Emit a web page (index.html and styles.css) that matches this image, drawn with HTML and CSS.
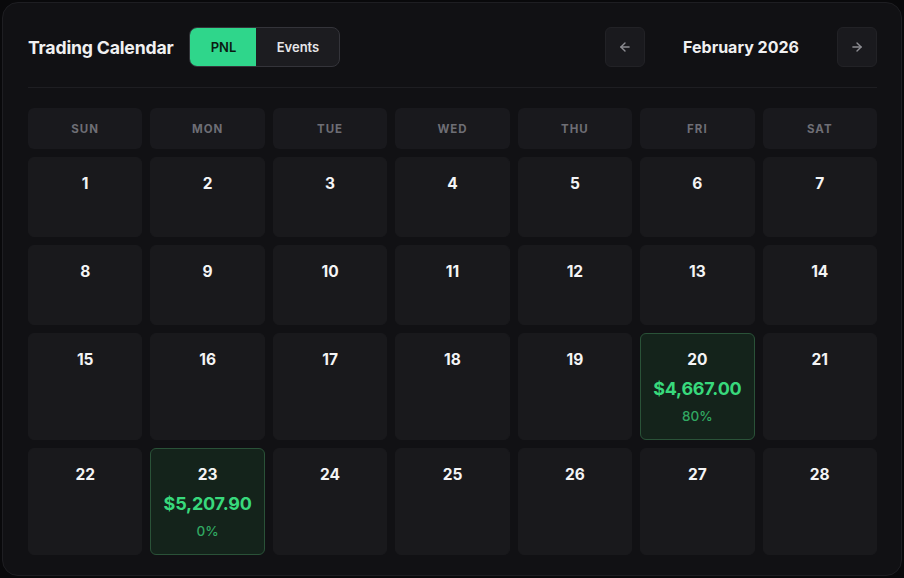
FILE: index.html
```html
<!DOCTYPE html>
<html lang="en">
<head>
  <meta charset="UTF-8" />
  <title>Trading Calendar</title>
  <link rel="stylesheet" href="styles.css">
</head>
<body>
  <div class="calendar">
    <div class="cal-header">
      <div class="cal-left">
        <h1>Trading Calendar</h1>
        <div class="toggle">
          <button class="toggle-btn active">PNL</button>
          <button class="toggle-btn">Events</button>
        </div>
      </div>
      <div class="cal-nav">
        <button class="nav-btn" aria-label="Previous month">
          <svg width="14" height="14" viewBox="0 0 24 24" fill="none" stroke="currentColor" stroke-width="2.4" stroke-linecap="round" stroke-linejoin="round"><path d="M19 12H5"/><path d="M12 19l-7-7 7-7"/></svg>
        </button>
        <div class="month">February 2026</div>
        <button class="nav-btn" aria-label="Next month">
          <svg width="14" height="14" viewBox="0 0 24 24" fill="none" stroke="currentColor" stroke-width="2.4" stroke-linecap="round" stroke-linejoin="round"><path d="M5 12h14"/><path d="M12 5l7 7-7 7"/></svg>
        </button>
      </div>
    </div>

    <div class="grid" id="grid">
      <div class="dow">SUN</div>
      <div class="dow">MON</div>
      <div class="dow">TUE</div>
      <div class="dow">WED</div>
      <div class="dow">THU</div>
      <div class="dow">FRI</div>
      <div class="dow">SAT</div>
    </div>
  </div>

  <script>
    // pnl entries keyed by day of month
    const pnl = {
      20: { amount: '$4,667.00', pct: '80%' },
      23: { amount: '$5,207.90', pct: '0%' }
    };

    const grid = document.getElementById('grid');
    for (let d = 1; d <= 28; d++) {
      const cell = document.createElement('div');
      cell.className = 'day';
      let html = '<div class="date">' + d + '</div>';
      if (pnl[d]) {
        cell.classList.add('profit');
        html += '<div class="amount">' + pnl[d].amount + '</div>';
        html += '<div class="pct">' + pnl[d].pct + '</div>';
      }
      cell.innerHTML = html;
      grid.appendChild(cell);
    }
  </script>
</body>
</html>
```

FILE: styles.css
```css
* { box-sizing: border-box; }
body { margin: 0; background: #09090b; font-family: Inter, "Liberation Sans", sans-serif; color: #f2f2f3; }

.calendar { margin: 2px; height: 574px; background: #111114; border: 1px solid #1e1e22; border-radius: 16px; padding: 24px 24px 0 25px; }

.cal-header { display: flex; justify-content: space-between; align-items: center; height: 40px; margin-bottom: 20px; }
.cal-left { display: flex; align-items: center; gap: 16px; }
h1 { margin: 0; font-size: 17.7px; font-weight: 700; letter-spacing: -0.2px; color: #f0f0f1; }

.toggle { display: flex; height: 40px; border: 1px solid #34343a; border-radius: 8px; background: #1c1c20; overflow: hidden; }
.toggle-btn { border: 0; background: transparent; font-family: inherit; font-size: 13px; font-weight: 600; color: #e6e6e8; width: 83px; padding: 0; cursor: pointer; }
.toggle-btn.active { background: #2fd68b; color: #0b1a12; width: 66px; }

.cal-nav { display: flex; align-items: center; }
.nav-btn { width: 40px; height: 40px; border: 1px solid #222226; background: #1a1a1e; border-radius: 6px; color: #8d8d93; display: flex; align-items: center; justify-content: center; padding: 0; }
.month { width: 192px; text-align: center; font-size: 16px; font-weight: 700; color: #f0f0f1; }

.grid { border-top: 1px solid #1e1e22; padding-top: 20px; display: grid; grid-template-columns: repeat(7, 1fr); grid-auto-rows: minmax(80px, auto); grid-template-rows: 41px; gap: 8px; }

.dow { background: #19191d; border-radius: 6px; display: flex; align-items: center; justify-content: center; font-size: 11.5px; font-weight: 700; letter-spacing: 1px; color: #6e6e75; }

.day { background: #19191c; border: 1px solid #19191c; border-radius: 6px; padding: 16px 6px 14px; text-align: center; }
.date { font-size: 15.5px; font-weight: 700; line-height: 20px; color: #f4f4f5; }
.amount { margin-top: 8px; font-size: 18px; line-height: 22px; font-weight: 700; color: #38d97c; letter-spacing: -0.2px; }
.pct { margin-top: 7px; font-size: 13.5px; line-height: 18px; font-weight: 500; color: #31a862; }
.day.profit { background: #14231b; border-color: #2a5238; }
```
